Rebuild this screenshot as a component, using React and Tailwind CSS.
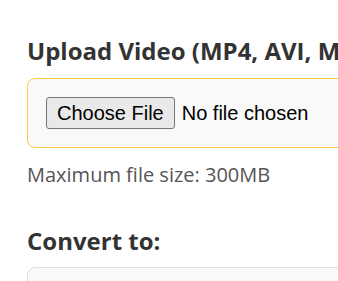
export default function App() {
  return (
    <div className="w-[338px] h-[281px] overflow-hidden bg-white">
      <div className="w-[640px] pl-[27px]">
        <h2 className="mt-[35px] text-[24px] leading-[32px] font-bold text-[#333] font-['Open_Sans',sans-serif] whitespace-nowrap">
          Upload Video (MP4, AVI, MOV, MKV, WEBM)
        </h2>
        <div className="mt-[11px] rounded-lg border-[1.5px] border-[#ffc940] bg-[#f9f9f9] p-[18px] flex items-center">
          <button className="h-[31.5px] px-[10px] rounded-[3px] border-[1.5px] border-[#767676] bg-[#e9e9e9] text-[20px] leading-none text-black font-['Liberation_Sans',Arial,sans-serif]">
            Choose File
          </button>
          <span className="ml-[7px] text-[20px] text-black font-['Liberation_Sans',Arial,sans-serif]">
            No file chosen
          </span>
        </div>
        <p className="mt-[14px] text-[20px] leading-[26px] text-[#555] font-['Open_Sans',sans-serif]">
          Maximum file size: 300MB
        </p>
        <h2 className="mt-[37px] text-[24px] leading-[32px] font-bold text-[#333] font-['Open_Sans',sans-serif]">
          Convert to:
        </h2>
        <div className="mt-[10px] h-[60px] rounded-lg border-[1.5px] border-[#dddddd] bg-[#f9f9f9]"></div>
      </div>
    </div>
  );
}
